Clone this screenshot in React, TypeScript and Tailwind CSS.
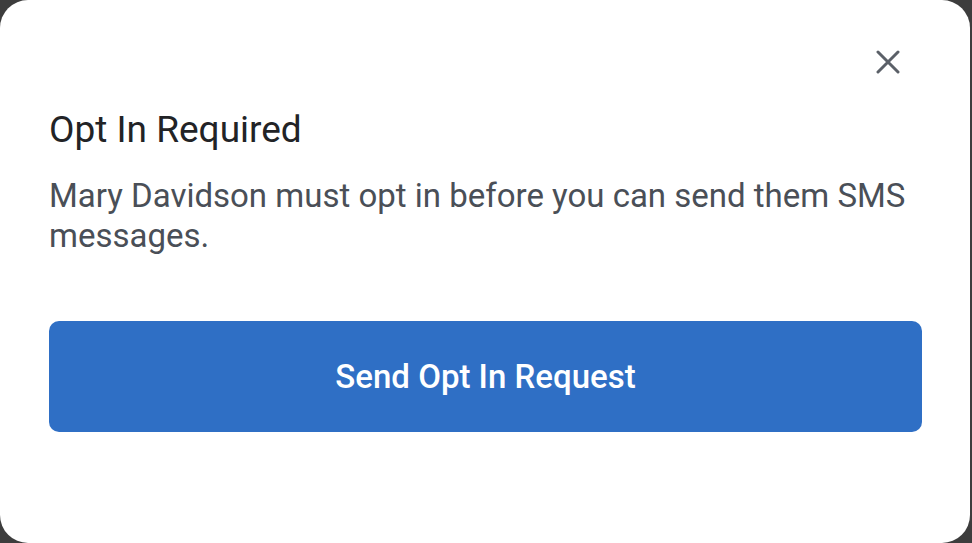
import React from "react";

export default function App() {
  return (
    <div className="w-[972px] h-[543px] bg-[#3d3d3d] flex overflow-hidden" style={{ fontFamily: "Roboto, 'Noto Sans', sans-serif" }}>
      <div className="mr-[2px] flex-1 bg-white rounded-[28px] flex flex-col pl-[49px] pr-[48px]">
        <div className="flex justify-end pt-[47px]">
          <button className="w-[30px] h-[30px] flex items-center justify-center mr-[19px]" aria-label="Close">
            <svg width="24" height="24" viewBox="0 0 24 24" fill="none" stroke="#5b6068" strokeWidth="3" strokeLinecap="round">
              <path d="M2 2L22 22M22 2L2 22" />
            </svg>
          </button>
        </div>
        <h2 className="mt-[31px] text-[37px] leading-[44px] text-[#222326]">Opt In Required</h2>
        <p className="mt-[24px] text-[33px] leading-[40px] text-[#4a4f57]">
          Mary Davidson must opt in before you can send them SMS messages.
        </p>
        <button className="mt-[65px] h-[111px] w-full rounded-[10px] bg-[#2f6fc5] text-white text-[33px] font-medium">
          Send Opt In Request
        </button>
      </div>
    </div>
  );
}
